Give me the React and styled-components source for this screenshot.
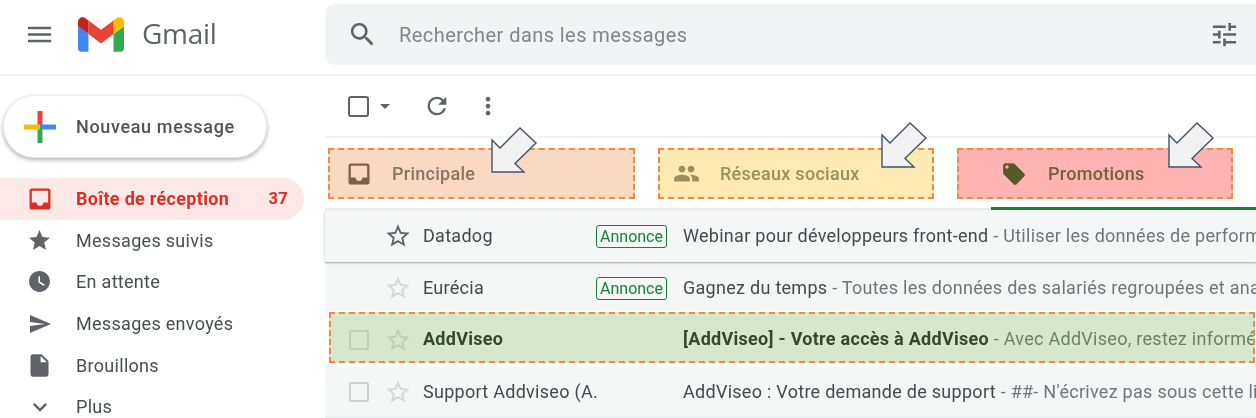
import styled, { createGlobalStyle } from "styled-components";

const GlobalStyle = createGlobalStyle`
  html, body {
    margin: 0;
    padding: 0;
    background: #fff;
    overflow: hidden;
  }
  * {
    box-sizing: border-box;
  }
`;

const ICONS = {
  menu: "M3 18h18v-2H3v2zm0-5h18v-2H3v2zm0-7v2h18V6H3z",
  search:
    "M15.5 14h-.79l-.28-.27A6.471 6.471 0 0 0 16 9.5 6.5 6.5 0 1 0 9.5 16c1.61 0 3.09-.59 4.23-1.57l.27.28v.79l5 4.99L20.49 19l-4.99-5zm-6 0C7.01 14 5 11.99 5 9.5S7.01 5 9.5 5 14 7.01 14 9.5 11.99 14 9.5 14z",
  tune: "M3 17v2h6v-2H3zM3 5v2h10V5H3zm10 16v-2h8v-2h-8v-2h-2v6h2zM7 9v2H3v2h4v2h2V9H7zm14 4v-2H11v2h10zm-6-4h2V7h4V5h-4V3h-2v6z",
  inbox:
    "M19 3H4.99c-1.11 0-1.98.89-1.98 2L3 19c0 1.1.88 2 1.99 2H19c1.1 0 2-.9 2-2V5c0-1.11-.9-2-2-2zm0 12h-4c0 1.66-1.35 3-3 3s-3-1.34-3-3H4.99V5H19v10z",
  star: "M12 17.27L18.18 21l-1.64-7.03L22 9.24l-7.19-.61L12 2 9.19 8.63 2 9.24l5.46 4.73L5.82 21z",
  starOutline:
    "M22 9.24l-7.19-.62L12 2 9.19 8.63 2 9.24l5.46 4.73L5.82 21 12 17.27 18.18 21l-1.63-7.03L22 9.24zM12 15.4l-3.76 2.27 1-4.28-3.32-2.88 4.38-.38L12 6.1l1.71 4.04 4.38.38-3.32 2.88 1 4.28L12 15.4z",
  clock:
    "M12 2C6.5 2 2 6.5 2 12s4.5 10 10 10 10-4.5 10-10S17.5 2 12 2zm4.2 14.2L11 13V7h1.5v5.2l4.5 2.7-.8 1.3z",
  send: "M2.01 21L23 12 2.01 3 2 10l15 2-15 2z",
  draft:
    "M6 2c-1.1 0-1.99.9-1.99 2L4 20c0 1.1.89 2 1.99 2H18c1.1 0 2-.9 2-2V8l-6-6H6zm7 7V3.5L18.5 9H13z",
  chevron: "M7.41 8.59L12 13.17l4.59-4.58L18 10l-6 6-6-6 1.41-1.41z",
  refresh:
    "M17.65 6.35A7.958 7.958 0 0 0 12 4c-4.42 0-7.99 3.58-7.99 8s3.57 8 7.99 8c3.73 0 6.84-2.55 7.73-6h-2.08A5.99 5.99 0 0 1 12 18c-3.31 0-6-2.69-6-6s2.69-6 6-6c1.66 0 3.14.69 4.22 1.78L13 11h7V4l-2.35 2.35z",
  more: "M12 8c1.1 0 2-.9 2-2s-.9-2-2-2-2 .9-2 2 .9 2 2 2zm0 2c-1.1 0-2 .9-2 2s.9 2 2 2 2-.9 2-2-.9-2-2-2zm0 6c-1.1 0-2 .9-2 2s.9 2 2 2 2-.9 2-2-.9-2-2-2z",
  caret: "M7 10l5 5 5-5z",
  people:
    "M16 11c1.66 0 2.99-1.34 2.99-3S17.66 5 16 5c-1.66 0-3 1.34-3 3s1.34 3 3 3zm-8 0c1.66 0 2.99-1.34 2.99-3S9.66 5 8 5C6.34 5 5 6.34 5 8s1.34 3 3 3zm0 2c-2.33 0-7 1.17-7 3.5V19h14v-2.5c0-2.33-4.67-3.5-7-3.5zm8 0c-.29 0-.62.02-.97.05 1.16.84 1.97 1.97 1.97 3.45V19h6v-2.5c0-2.33-4.67-3.5-7-3.5z",
  label:
    "M21.41 11.58l-9-9C12.05 2.22 11.55 2 11 2H4c-1.1 0-2 .9-2 2v7c0 .55.22 1.05.59 1.42l9 9c.36.36.86.58 1.41.58.55 0 1.05-.22 1.41-.59l7-7c.37-.36.59-.86.59-1.41 0-.55-.23-1.06-.59-1.42zM5.5 7C4.67 7 4 6.33 4 5.5S4.67 4 5.5 4 7 4.67 7 5.5 6.33 7 5.5 7z",
};

const Svg = styled.svg`
  display: block;
  flex: none;
  width: ${(p) => p.$size}px;
  height: ${(p) => p.$size}px;
  fill: ${(p) => p.$color};
`;

const Icon = ({ name, size = 31, color = "#5f6368" }) => (
  <Svg viewBox="0 0 24 24" $size={size} $color={color}>
    <path d={ICONS[name]} />
  </Svg>
);

const Page = styled.div`
  width: 1256px;
  height: 418px;
  overflow: hidden;
  font-family: Roboto, "Noto Sans", sans-serif;
  color: #3c4043;
  background: #fff;
  filter: blur(0.4px);
`;

const Header = styled.header`
  height: 76px;
  display: flex;
  align-items: flex-start;
  border-bottom: 2px solid #f1f3f4;
`;

const Brand = styled.div`
  width: 325px;
  height: 68px;
  flex: none;
  display: flex;
  align-items: center;
  padding-left: 24px;
`;

const Logo = styled.svg`
  width: 46px;
  height: 35px;
  margin-left: 23px;
`;

const BrandName = styled.span`
  margin: 0 0 2px 18px;
  font-family: "Open Sans", Roboto, sans-serif;
  font-size: 28px;
  letter-spacing: -0.3px;
  color: #5f6368;
`;

const SearchBar = styled.div`
  flex: 1;
  height: 61px;
  margin-top: 4px;
  display: flex;
  align-items: center;
  padding: 0 16px 0 22px;
  background: #f1f3f4;
  border-radius: 10px 0 0 10px;
`;

const Placeholder = styled.span`
  flex: 1;
  margin-left: 21px;
  font-size: 20px;
  letter-spacing: 0.43px;
  color: #80868b;
`;

const Body = styled.div`
  display: flex;
  height: 342px;
`;

const Sidebar = styled.aside`
  width: 325px;
  flex: none;
  padding-top: 19px;
`;

const ComposeButton = styled.div`
  width: 264px;
  height: 63px;
  margin-left: 3px;
  display: flex;
  align-items: center;
  padding-left: 20px;
  border-radius: 32px;
  background: #fff;
  border: 1px solid #eceded;
  box-shadow: 0 2px 4px rgba(60, 64, 67, 0.4);
  font-size: 18px;
  font-weight: 500;
  letter-spacing: 0.65px;
  color: #50545a;
`;

const ComposeLabel = styled.span`
  margin-left: 20px;
`;

const NavList = styled.nav`
  margin-top: 20px;
`;

const NavRow = styled.div`
  width: 304px;
  height: 41.6px;
  display: flex;
  align-items: center;
  padding: 0 16px 0 24px;
  border-radius: 0 21px 21px 0;
  font-size: 18px;
  letter-spacing: 0.3px;
  font-weight: ${(p) => (p.$active ? 700 : 400)};
  color: ${(p) => (p.$active ? "#d93025" : "#494d52")};
  background: ${(p) => (p.$active ? "#fce8e6" : "transparent")};
`;

const NavIconSlot = styled.span`
  width: 31px;
  flex: none;
  display: flex;
  justify-content: center;
`;

const NavLabel = styled.span`
  flex: 1;
  margin-left: 21px;
`;

const NavCount = styled.span`
  font-size: 16.5px;
`;

const Main = styled.main`
  flex: 1;
  min-width: 0;
`;

const Toolbar = styled.div`
  height: 62px;
  display: flex;
  align-items: center;
  padding-left: 23px;
  border-bottom: 2px solid #f1f3f4;
`;

const ToolCheckbox = styled.span`
  width: 21px;
  height: 21px;
  flex: none;
  border: 2.5px solid #5f6368;
  border-radius: 3px;
`;

const ToolSpacer = styled.span`
  width: ${(p) => p.$width}px;
  flex: none;
`;

const TabBar = styled.div`
  height: 72px;
  position: relative;
  display: flex;
  gap: 23px;
  padding: 10px 0 0 3px;
`;

const Tab = styled.div`
  position: relative;
  width: ${(p) => p.$width}px;
  height: 51px;
  display: flex;
  align-items: center;
  padding-left: ${(p) => p.$pad}px;
  background: ${(p) => p.$bg};
  border: 2px dashed #f08a47;
  font-size: 18px;
  font-weight: 500;
  letter-spacing: 0.28px;
  color: ${(p) => p.$text};
`;

const TabLabel = styled.span`
  margin-left: ${(p) => p.$gap}px;
`;

const Arrow = styled.svg`
  position: absolute;
  left: ${(p) => p.$left}px;
  top: ${(p) => p.$top}px;
  width: 47px;
  height: 46px;
`;

const ActiveLine = styled.div`
  position: absolute;
  right: 0;
  bottom: 0;
  width: 265px;
  height: 3px;
  background: #188038;
`;

const RowList = styled.div`
  border-top: 2px solid #eceeef;
  margin-top: -2px;
`;

const Row = styled.div`
  position: relative;
  height: 52px;
  display: flex;
  align-items: center;
  padding-left: 24px;
  font-size: 18px;
  letter-spacing: 0.28px;
  background: #f5f7f7;
  box-shadow: ${(p) =>
    p.$hover
      ? "0 1px 2px rgba(60, 64, 67, 0.45)"
      : p.$last
        ? "inset 0 -2px #eceef0"
        : "none"};
  z-index: ${(p) => (p.$hover ? 1 : 0)};
`;

const MarkedRow = styled(Row)`
  height: 51px;
  margin: -2px 1px 3px 4px;
  padding: 4px 0 0 18px;
  background: #d7e7cd;
  border: 2px dashed #f08a47;
  outline: 1px solid #fff;
`;

const CheckCell = styled.span`
  width: 20px;
  height: 20px;
  flex: none;
  border: 2px solid ${(p) => (p.$hidden ? "transparent" : p.$marked ? "#bfcfb6" : "#cfd2d3")};
  border-radius: 2px;
  margin-right: 15px;
`;

const Sender = styled.div`
  width: 260px;
  flex: none;
  margin: 0 0 2px 11px;
  padding-right: 16px;
  display: flex;
  align-items: center;
  justify-content: space-between;
  font-weight: ${(p) => (p.$unread ? 700 : 400)};
  color: ${(p) => (p.$unread ? "#33482c" : "#45494e")};
`;

const AdBadge = styled.span`
  width: 71px;
  height: 23px;
  margin-top: 2px;
  display: flex;
  align-items: center;
  justify-content: center;
  border: 1.5px solid #188038;
  border-radius: 3px;
  font-size: 16px;
  letter-spacing: 0;
  color: #188038;
`;

const Message = styled.div`
  flex: 1;
  min-width: 0;
  margin-bottom: 2px;
  white-space: nowrap;
  overflow: hidden;
`;

const Subject = styled.span`
  font-weight: ${(p) => (p.$unread ? 700 : 400)};
  color: ${(p) => (p.$unread ? "#33482c" : "#45494e")};
`;

const Snippet = styled.span`
  color: ${(p) => (p.$marked ? "#6d8264" : "#70757a")};
`;

const tabs = [
  {
    icon: "inbox",
    label: "Principale",
    width: 307,
    pad: 14.5,
    gap: 19.5,
    size: 28,
    bg: "#fad9c3",
    text: "#8d7362",
    iconColor: "#7d5f4b",
    arrow: [161, -23],
  },
  {
    icon: "people",
    label: "Réseaux sociaux",
    width: 276,
    pad: 13,
    gap: 20,
    size: 27,
    bg: "#feeab2",
    text: "#98905f",
    iconColor: "#9a8e5c",
    arrow: [221, -28],
  },
  {
    icon: "label",
    label: "Promotions",
    width: 276,
    pad: 42,
    gap: 21,
    size: 26,
    bg: "#ffb3b3",
    text: "#6e6339",
    iconColor: "#575a26",
    arrow: [209, -28],
  },
];

const navItems = [
  { icon: "inbox", size: 28, label: "Boîte de réception", count: 37, active: true },
  { icon: "star", size: 25, label: "Messages suivis" },
  { icon: "clock", size: 25, label: "En attente" },
  { icon: "send", size: 24, label: "Messages envoyés" },
  { icon: "draft", size: 27, label: "Brouillons" },
  { icon: "chevron", size: 28, label: "Plus" },
];

const GmailLogo = () => (
  <Logo viewBox="52 42 88 66">
    <path fill="#4285f4" d="M58 108h14V74L52 59v43c0 3.32 2.69 6 6 6" />
    <path fill="#34a853" d="M120 108h14c3.32 0 6-2.69 6-6V59l-20 15" />
    <path fill="#fbbc04" d="M120 48v26l20-15v-8c0-7.42-8.47-11.65-14.4-7.2" />
    <path fill="#ea4335" d="M72 74V48l24 18 24-18v26L96 92" />
    <path fill="#c5221f" d="M52 51v8l20 15V48l-5.6-4.2c-5.94-4.45-14.4-.22-14.4 7.2" />
  </Logo>
);

const PlusIcon = () => (
  <svg width="32" height="32" viewBox="0 0 32 32">
    <rect x="13.5" y="0" width="5" height="16" fill="#ea4335" />
    <rect x="16" y="13.5" width="16" height="5" fill="#4285f4" />
    <rect x="13.5" y="16" width="5" height="16" fill="#34a853" />
    <rect x="0" y="13.5" width="16" height="5" fill="#fbbc04" />
  </svg>
);

const CalloutArrow = ({ left, top }) => (
  <Arrow $left={left} $top={top} viewBox="0 0 47 46">
    <path
      d="M1 45V13L9 21L29 1L45 16L24 36.5L33 45Z"
      fill="#f2f2f2"
      stroke="#44546a"
      strokeWidth="1.4"
    />
  </Arrow>
);

export default function App() {
  return (
    <Page>
      <GlobalStyle />
      <Header>
        <Brand>
          <Icon name="menu" />
          <GmailLogo />
          <BrandName>Gmail</BrandName>
        </Brand>
        <SearchBar>
          <Icon name="search" />
          <Placeholder>Rechercher dans les messages</Placeholder>
          <Icon name="tune" />
        </SearchBar>
      </Header>
      <Body>
        <Sidebar>
          <ComposeButton>
            <PlusIcon />
            <ComposeLabel>Nouveau message</ComposeLabel>
          </ComposeButton>
          <NavList>
            {navItems.map((item) => (
              <NavRow key={item.label} $active={item.active}>
                <NavIconSlot>
                  <Icon
                    name={item.icon}
                    size={item.size}
                    color={item.active ? "#d93025" : "#5f6368"}
                  />
                </NavIconSlot>
                <NavLabel>{item.label}</NavLabel>
                <NavCount>{item.count}</NavCount>
              </NavRow>
            ))}
          </NavList>
        </Sidebar>
        <Main>
          <Toolbar>
            <ToolCheckbox />
            <ToolSpacer $width={3.5} />
            <Icon name="caret" size={24} />
            <ToolSpacer $width={26} />
            <Icon name="refresh" size={28} />
            <ToolSpacer $width={23.5} />
            <Icon name="more" size={28} />
          </Toolbar>
          <TabBar>
            {tabs.map((tab) => (
              <Tab
                key={tab.label}
                $width={tab.width}
                $pad={tab.pad}
                $bg={tab.bg}
                $text={tab.text}
              >
                <Icon name={tab.icon} size={tab.size} color={tab.iconColor} />
                <TabLabel $gap={tab.gap}>{tab.label}</TabLabel>
                <CalloutArrow left={tab.arrow[0]} top={tab.arrow[1]} />
              </Tab>
            ))}
            <ActiveLine />
          </TabBar>
          <RowList>
            <Row $hover>
              <CheckCell $hidden />
              <Icon name="starOutline" color="#5f6368" size={28} />
              <Sender>
                Datadog
                <AdBadge>Annonce</AdBadge>
              </Sender>
              <Message>
                <Subject>Webinar pour développeurs front-end</Subject>
                <Snippet> - Utiliser les données de performance</Snippet>
              </Message>
            </Row>
            <Row>
              <CheckCell $hidden />
              <Icon name="starOutline" color="#d5d8d9" size={28} />
              <Sender>
                Eurécia
                <AdBadge>Annonce</AdBadge>
              </Sender>
              <Message>
                <Subject>Gagnez du temps</Subject>
                <Snippet> - Toutes les données des salariés regroupées et analysées</Snippet>
              </Message>
            </Row>
            <MarkedRow>
              <CheckCell $marked />
              <Icon name="starOutline" color="#bfcfb6" size={28} />
              <Sender $unread>AddViseo</Sender>
              <Message>
                <Subject $unread>[AddViseo] - Votre accès à AddViseo</Subject>
                <Snippet $marked> - Avec AddViseo, restez informés</Snippet>
              </Message>
            </MarkedRow>
            <Row $last>
              <CheckCell />
              <Icon name="starOutline" color="#d5d8d9" size={28} />
              <Sender>Support Addviseo (A.</Sender>
              <Message>
                <Subject>AddViseo : Votre demande de support</Subject>
                <Snippet> - ##- N'écrivez pas sous cette ligne</Snippet>
              </Message>
            </Row>
          </RowList>
        </Main>
      </Body>
    </Page>
  );
}
